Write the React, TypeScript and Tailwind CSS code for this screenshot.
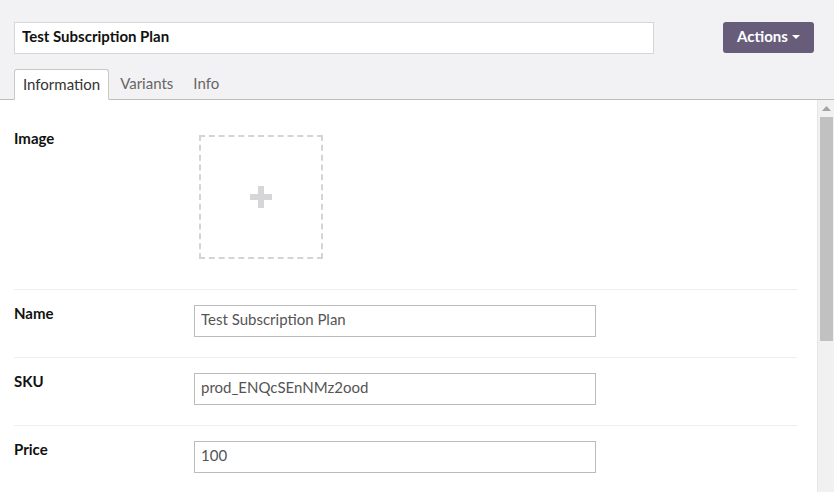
const fields = [
  { label: 'Name', value: 'Test Subscription Plan' },
  { label: 'SKU', value: 'prod_ENQcSEnNMz2ood' },
  { label: 'Price', value: '100' },
];

function FieldRow({ label, value }: { label: string; value: string }) {
  return (
    <div className="flex border-t border-[#eeeeee] pt-[15px] pb-[20px]">
      <div className="w-[180px] shrink-0 -mt-[3px] text-[15px] font-bold text-[#111]">{label}</div>
      <input
        readOnly
        value={value}
        className="h-[32px] w-[402px] border border-[#bbbbbb] bg-white pl-[6px] pr-[7px] pb-[5px] text-[15px] text-[#555] outline-none"
      />
    </div>
  );
}

export default function App() {
  return (
    <div className="flex h-[492px] w-[834px] flex-col overflow-hidden bg-white font-['Lato','Noto_Sans',sans-serif]">
      {/* header */}
      <div className="shrink-0 border-b border-[#bdbdbd] bg-[#f2f2f4] pl-[14px] pr-[20px] pt-[22px]">
        <div className="flex items-start">
          <input
            readOnly
            value="Test Subscription Plan"
            className="h-[32px] w-[640px] border border-[#d6d6d6] bg-white px-[7px] pb-[4px] text-[15px] font-bold text-[#111] outline-none"
          />
          <button className="ml-auto flex h-[31px] w-[91px] items-center justify-center gap-[4px] rounded-[3px] bg-[#675d7b] pb-[2px] text-[15px] font-bold text-white">
            Actions
            <svg width="8" height="4" viewBox="0 0 8 4" className="mt-[1px]">
              <path d="M0 0h8L4 4z" fill="white" />
            </svg>
          </button>
        </div>
        <div className="mt-[15px] flex text-[15px] text-[#666]">
          <div className="-mb-px h-[31px] rounded-t-[3px] border border-b-white border-[#c8c8c8] bg-white px-[8px] pt-[3px] text-[#333]">
            Information
          </div>
          <div className="h-[30px] pl-[11px] pr-[9px] pt-[3px]">Variants</div>
          <div className="h-[30px] px-[11px] pt-[3px]">Info</div>
        </div>
      </div>

      {/* body */}
      <div className="flex min-h-0 flex-1">
        <div className="min-w-0 flex-1 overflow-hidden pl-[14px] pr-[20px]">
          <div className="flex pt-[35px] pb-[30px]">
            <div className="w-[185px] shrink-0 -mt-[8px] text-[15px] font-bold text-[#111]">Image</div>
            <div className="flex h-[124px] w-[124px] items-center justify-center border-2 border-dashed border-[#d4d4d4]">
              <svg width="22" height="22" viewBox="0 0 22 22">
                <path d="M8 0h6v8h8v6h-8v8H8v-8H0V8h8z" fill="#d6d6d9" />
              </svg>
            </div>
          </div>
          {fields.map((f) => (
            <FieldRow key={f.label} label={f.label} value={f.value} />
          ))}
        </div>

        {/* scrollbar */}
        <div className="flex w-[17px] shrink-0 flex-col items-center border-l border-[#e6e6e6] bg-[#f1f1f1]">
          <svg width="9" height="5" viewBox="0 0 9 5" className="mt-[6px]">
            <path d="M4.5 0L9 5H0z" fill="#a3a3a3" />
          </svg>
          <div className="mt-[6px] h-[224px] w-[13px] bg-[#c1c1c1]" />
        </div>
      </div>
    </div>
  );
}
